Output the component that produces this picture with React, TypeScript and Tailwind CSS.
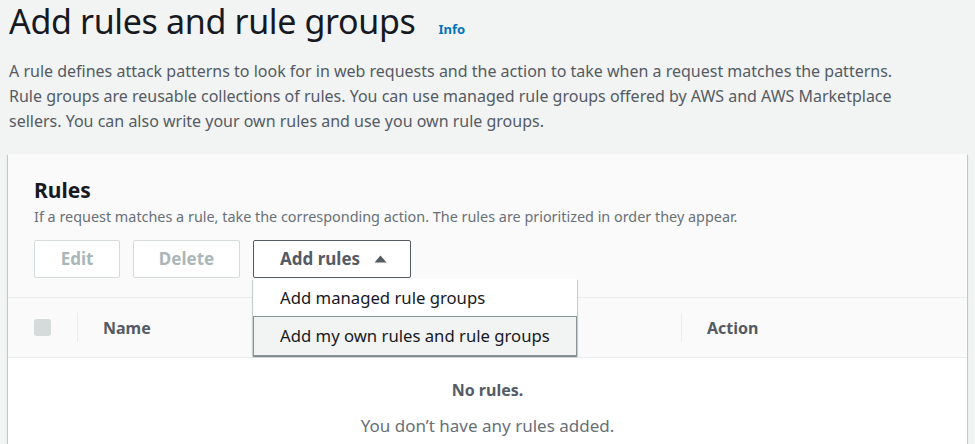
import React from 'react';

const font = { fontFamily: '"Noto Sans", "Open Sans", sans-serif' };

const panelShadow =
  'shadow-[0_1px_1px_0_rgba(0,28,36,0.3),1px_1px_1px_0_rgba(0,28,36,0.15),-1px_1px_1px_0_rgba(0,28,36,0.15)]';

function Caret() {
  return (
    <svg width="13" height="8" viewBox="0 0 13 8" className="shrink-0">
      <path d="M6.5 0.5 L12.5 7.5 L0.5 7.5 Z" fill="#545b64" />
    </svg>
  );
}

function Divider() {
  return <div className="w-px h-[29px] bg-[#eaeded] shrink-0" />;
}

export default function App() {
  return (
    <div style={font} className="min-h-screen bg-[#f2f3f3] px-2 overflow-hidden">
      {/* Page header */}
      <div className="pl-px pt-px flex items-baseline">
        <h1 className="text-[34px] leading-[40px] tracking-[-0.35px] font-normal text-[#16191f]">
          Add rules and rule groups
        </h1>
        <a className="ml-[23px] text-[13px] font-bold text-[#0073bb] cursor-pointer">Info</a>
      </div>
      <p className="pl-px mt-[18px] w-[905px] text-[16px] leading-[25px] text-[#545b64]">
        A rule defines attack patterns to look for in web requests and the action to take when a request matches the
        patterns. Rule groups are reusable collections of rules. You can use managed rule groups offered by AWS and AWS
        Marketplace sellers. You can also write your own rules and use you own rule groups.
      </p>

      {/* Rules panel */}
      <div className={`relative mt-[20px] bg-white ${panelShadow}`}>
        <div className="bg-[#fafafa] px-[26px] pt-[22px] pb-[19px]">
          <h2 className="text-[21px] leading-[28px] font-bold text-[#16191f]">Rules</h2>
          <p className="mt-[3px] text-[14.4px] leading-[20px] text-[#687078]">
            If a request matches a rule, take the corresponding action. The rules are prioritized in order they appear.
          </p>
          <div className="mt-[13px] flex gap-[13px]">
            <button className="w-[86px] h-[38px] rounded-[2px] border border-[#d5dbdb] bg-white text-[17px] font-bold text-[#aab7b8]">
              Edit
            </button>
            <button className="w-[107px] h-[38px] rounded-[2px] border border-[#d5dbdb] bg-white text-[17px] font-bold text-[#aab7b8]">
              Delete
            </button>
            <button className="w-[158px] h-[38px] rounded-[2px] border border-[#545b64] bg-white pl-[26px] flex items-center gap-[14px] text-[17px] font-bold text-[#545b64]">
              Add rules
              <Caret />
            </button>
          </div>
        </div>

        {/* Table header */}
        <div className="grid grid-cols-[69px_604px_1fr] h-[61px] border-y border-[#eaeded] bg-[#fafafa]">
          <div className="flex items-center pl-[26px]">
            <div className="w-[17px] h-[17px] rounded-[3px] bg-[#d5dbdb]" />
          </div>
          <div className="flex items-center gap-[25px]">
            <Divider />
            <span className="text-[16px] font-bold text-[#545b64]">Name</span>
          </div>
          <div className="flex items-center gap-[25px]">
            <Divider />
            <span className="text-[16px] font-bold text-[#545b64]">Action</span>
          </div>
        </div>

        {/* Empty state */}
        <div className="bg-white pt-[20px] pb-[30px] text-center leading-[24px]">
          <p className="text-[16px] font-bold text-[#545b64]">No rules.</p>
          <p className="mt-[12px] text-[17px] text-[#687078]">You don’t have any rules added.</p>
        </div>

        {/* Add rules dropdown menu */}
        <div className={`absolute left-[245px] top-[125px] w-[324px] bg-white ${panelShadow}`}>
          <div className="h-[37px] flex items-center pl-[27px] text-[16.7px] text-[#16191f]">Add managed rule groups</div>
          <div className="h-[40px] flex items-center pl-[26px] border border-[#879596] bg-[#f2f3f3] text-[16.7px] text-[#16191f]">
            Add my own rules and rule groups
          </div>
        </div>
      </div>
    </div>
  );
}
